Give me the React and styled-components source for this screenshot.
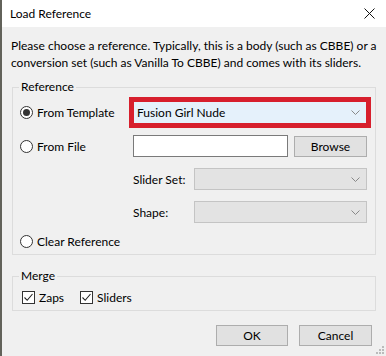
import React from 'react';
import styled, { createGlobalStyle } from 'styled-components';

const Global = createGlobalStyle`
  html, body { margin: 0; padding: 0; background: #f0f0f0; }
  * { box-sizing: border-box; }
`;

const Window = styled.div`
  width: 386px;
  height: 356px;
  position: relative;
  display: flex;
  flex-direction: column;
  background: #f0f0f0;
  border-left: 2px solid #62625a;
  font-family: Lato, "Liberation Sans", sans-serif;
  font-size: 12px;
  color: #000;
  overflow: hidden;
`;

const TitleBar = styled.div`
  height: 27px;
  flex: none;
  display: flex;
  align-items: center;
  justify-content: space-between;
  background: #fff;
  padding: 0 11px 0 8px;
`;

const Title = styled.span`
  font-size: 12px;
`;

const Intro = styled.p`
  margin: 10px 0 8px 9px;
  line-height: 17px;
  white-space: nowrap;
`;

const Group = styled.fieldset`
  margin: 0 10px 0 10px;
  padding: 0;
  border: 1px solid #dcdcdc;
  min-width: 0;
`;

const Legend = styled.legend`
  margin-left: 6px;
  padding: 0 2px;
  line-height: 16px;
`;

const RefGrid = styled.div`
  display: grid;
  grid-template-columns: 113px 1fr;
  grid-template-rows: 23px 22px 22px 22px 14px;
  row-gap: 11px;
  align-items: center;
  padding: 6px 8px 6px 7px;
`;

const RadioRow = styled.label`
  display: flex;
  align-items: center;
  gap: 4px;
  grid-column: 1;
  white-space: nowrap;
`;

const RadioCircle = styled.span`
  width: 13px;
  height: 13px;
  border: 1px solid #333;
  border-radius: 50%;
  background: #fff;
  display: grid;
  place-items: center;
  flex: none;
  &::after {
    content: '';
    width: 7px;
    height: 7px;
    border-radius: 50%;
    background: ${p => (p.$checked ? '#333' : 'transparent')};
  }
`;

const Combo = styled.div`
  grid-column: 2;
  height: ${p => (p.$highlight ? '23px' : '22px')};
  display: flex;
  align-items: center;
  justify-content: space-between;
  padding: 0 6px 0 3px;
  background: ${p => (p.$highlight ? '#e5f1fb' : '#e3e3e3')};
  border: 1px solid ${p => (p.$highlight ? '#d71f2d' : '#c4c4c4')};
  outline: ${p => (p.$highlight ? '4px solid #d71f2d' : 'none')};
  color: #000;
`;

const FileRow = styled.div`
  grid-column: 2;
  display: flex;
  gap: 6px;
  align-items: center;
`;

const TextField = styled.div`
  flex: 1;
  height: 22px;
  background: #fff;
  border: 1px solid #7a7a7a;
`;

const Button = styled.button`
  width: ${p => p.$w || 72}px;
  height: 21px;
  padding: 0;
  background: #e1e1e1;
  border: 1px solid #adadad;
  font: inherit;
  color: #000;
`;

const SubRow = styled.div`
  grid-column: 2;
  display: grid;
  grid-template-columns: 61px 1fr;
  align-items: center;
  height: 22px;
  & > ${Combo} {
    grid-column: 2;
  }
`;

const SubLabel = styled.span``;

const MergeRow = styled.div`
  display: flex;
  align-items: center;
  gap: 16px;
  height: 14px;
  margin: 6px 0 6px 9px;
`;

const Check = styled.label`
  display: flex;
  align-items: center;
  gap: 4px;
`;

const Box = styled.span`
  width: 13px;
  height: 13px;
  border: 1px solid #333;
  background: #fff;
  display: grid;
  place-items: center;
`;

const Buttons = styled.div`
  display: flex;
  justify-content: flex-end;
  gap: 11px;
  margin: 14px 14px 0 0;
`;

const Grip = styled.svg`
  position: absolute;
  right: 2px;
  bottom: 2px;
`;

const Chevron = () => (
  <svg width="9" height="5" viewBox="0 0 9 5">
    <path d="M0.5 0.5 L4.5 4.5 L8.5 0.5" fill="none" stroke="#888" strokeWidth="1" />
  </svg>
);

const Tick = () => (
  <svg width="11" height="11" viewBox="0 0 11 11">
    <path d="M1.5 5.5 L4.2 8.3 L9.5 2" fill="none" stroke="#222" strokeWidth="1.1" />
  </svg>
);

const Radio = ({ checked, children }) => (
  <RadioRow>
    <RadioCircle $checked={checked} />
    {children}
  </RadioRow>
);

export default function App() {
  return (
    <Window>
      <Global />
      <TitleBar>
        <Title>Load Reference</Title>
        <svg width="11" height="11" viewBox="0 0 11 11">
          <path d="M0.5 0.5 L10.5 10.5 M10.5 0.5 L0.5 10.5" stroke="#111" strokeWidth="1" />
        </svg>
      </TitleBar>

      <Intro>
        Please choose a reference. Typically, this is a body (such as CBBE) or a
        <br />
        conversion set (such as Vanilla To CBBE) and comes with its sliders.
      </Intro>

      <Group>
        <Legend>Reference</Legend>
        <RefGrid>
          <Radio checked>From Template</Radio>
          <Combo $highlight>
            <span>Fusion Girl Nude</span>
            <Chevron />
          </Combo>

          <Radio>From File</Radio>
          <FileRow>
            <TextField />
            <Button $w={73}>Browse</Button>
          </FileRow>

          <SubRow>
            <SubLabel>Slider Set:</SubLabel>
            <Combo>
              <span />
              <Chevron />
            </Combo>
          </SubRow>

          <SubRow>
            <SubLabel>Shape:</SubLabel>
            <Combo>
              <span />
              <Chevron />
            </Combo>
          </SubRow>

          <Radio>Clear Reference</Radio>
        </RefGrid>
      </Group>

      <Group style={{ marginTop: 13 }}>
        <Legend>Merge</Legend>
        <MergeRow>
          <Check>
            <Box><Tick /></Box>
            Zaps
          </Check>
          <Check>
            <Box><Tick /></Box>
            Sliders
          </Check>
        </MergeRow>
      </Group>

      <Buttons>
        <Button>OK</Button>
        <Button $w={73}>Cancel</Button>
      </Buttons>

      <Grip width="8" height="8" viewBox="0 0 8 8">
        {[[6, 0], [6, 3], [3, 3], [6, 6], [3, 6], [0, 6]].map(([x, y]) => (
          <rect key={`${x}-${y}`} x={x} y={y} width="2" height="2" fill="#bbb" />
        ))}
      </Grip>
    </Window>
  );
}
